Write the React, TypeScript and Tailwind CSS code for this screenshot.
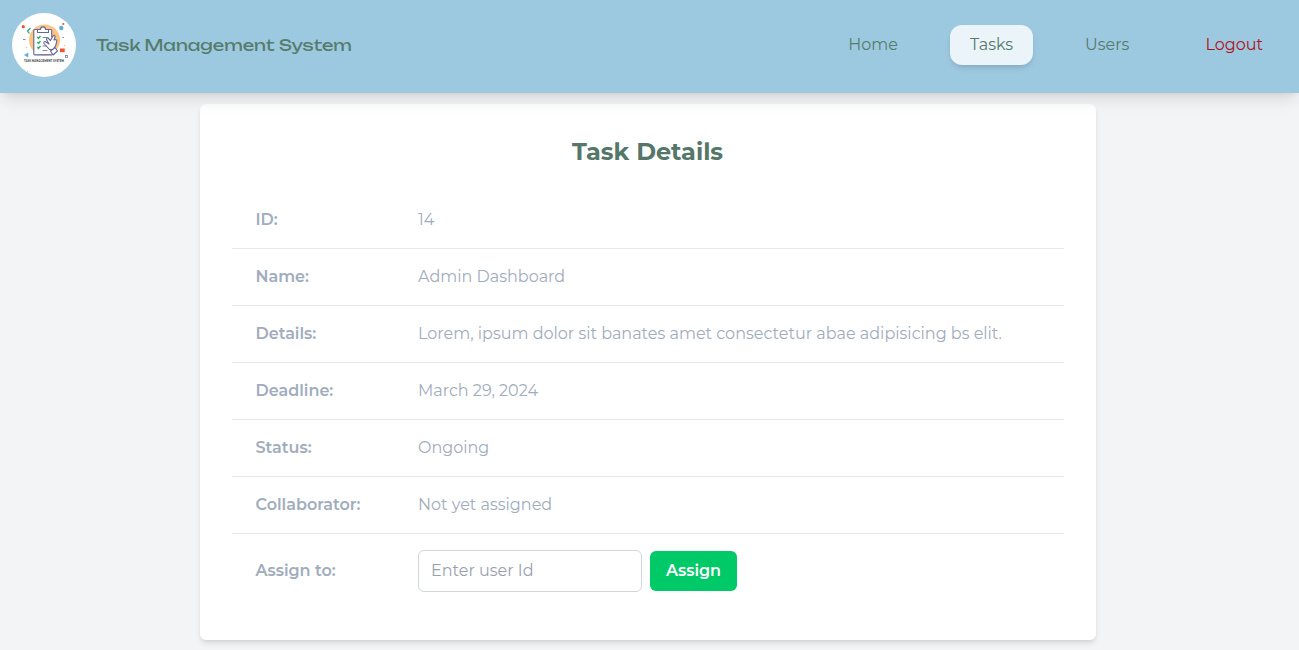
import React from 'react';

const rows = [
  { label: 'ID:', value: '14' },
  { label: 'Name:', value: 'Admin Dashboard' },
  { label: 'Details:', value: 'Lorem, ipsum dolor sit banates amet consectetur abae adipisicing bs elit.' },
  { label: 'Deadline:', value: 'March 29, 2024' },
  { label: 'Status:', value: 'Ongoing' },
  { label: 'Collaborator:', value: 'Not yet assigned' },
];

function Logo() {
  return (
    <svg viewBox="0 0 64 64" className="size-16 shrink-0 rounded-full bg-white" fill="none">
      <circle cx="32.5" cy="27" r="15.5" fill="#fdc382" />
      <path d="M22 17h18v24H22z" fill="#fff" />
      <g stroke="#62669a" strokeWidth="1.1" strokeLinejoin="round" strokeLinecap="round">
        <path d="M25.500 16.500h-2.500a1.200 1.200 0 0 0-1.200 1.200v23a1.200 1.200 0 0 0 1.200 1.200h16.500M36 16.500h2.500a1.200 1.200 0 0 1 1.200 1.200v6" />
        <path d="M25.500 19.500v-3h3c0-3.500 5-3.500 5 0h3v3z" fill="#fff" />
        <path d="M37.500 36.500l-5.500-6c-.8-2 1-2.500 2-1.500l3 2-2.500-4.500c0-2 2-2 2.500-.5l1.500 1.500 2.500-4.500c1-1.500 2.500-.5 2 1l-1 3 1.500-.5c1.500 0 1.500 2 1 3l-1 3.500 -2.500 3.500z" fill="#fff" />
        <path d="M38.500 38l4.500-3.500 2.500 3.500-4.500 4z" fill="#fff" />
        <path d="M31 24.500h5M31 33h3M31 37.500h4" strokeWidth=".8" />
      </g>
      <path d="M25.300 24l1.200 1.500 2-2.500M25.300 29l1.200 1.500 2-2.500M25.300 34l1.200 1.500 2-2.500" stroke="#27b26f" strokeWidth="1.400" />
      <path d="M18.500 15l-3 3 2 2.500" stroke="#22a674" strokeWidth="1.200" />
      <circle cx="11.300" cy="13.700" r="1.600" fill="#f4512c" />
      <circle cx="51.300" cy="11" r="1.100" fill="#f4512c" />
      <circle cx="49.300" cy="15" r="2.200" fill="#5aaedd" />
      <rect x="48" y="35.500" width="4.700" height="3.700" fill="#f4512c" />
      <path d="M12.500 42l3.500-2v4z" fill="#5aaedd" stroke="#5aaedd" strokeWidth=".6" />
      <path d="M11 26.500h2.500M50.500 24.500h1.500" stroke="#777ba5" strokeWidth=".9" />
      <rect x="53.500" y="42.500" width="2" height="2" stroke="#777ba5" strokeWidth=".8" />
      <circle cx="14.500" cy="34.500" r=".8" fill="#fdc382" />
      <circle cx="52.500" cy="32.500" r=".8" fill="#fdc382" />
      <path d="M15 59h1" stroke="#22a674" strokeWidth=".8" />
      <text x="12" y="48.800" textLength="40" lengthAdjust="spacingAndGlyphs" fontSize="3.600" fontWeight="600" fill="#333" fontFamily="Montserrat, sans-serif">TASK MANAGEMENT SYSTEM</text>
    </svg>
  );
}

export default function App() {
  return (
    <div className="min-h-[650px] bg-gray-100 font-['Montserrat',Inter,sans-serif] text-base">
      <header className="relative z-10 flex h-[93px] items-start justify-between bg-[#9dc9e0] pl-3 pr-9 pt-[13px] text-[#557c6c] shadow-lg">
        <div className="flex items-center gap-5">
          <Logo />
          <span className="font-['Unbounded','Montserrat',sans-serif] whitespace-nowrap">Task Management System</span>
        </div>
        <nav className="flex h-16 items-center">
          <a className="mr-8 px-5 py-2">Home</a>
          <a className="mr-8 rounded-xl bg-[#ebf4f9] px-5 py-2 shadow-md">Tasks</a>
          <a className="mr-14 px-5 py-2">Users</a>
          <a className="text-[#b01020]">Logout</a>
        </nav>
      </header>
      <main className="ml-[200px] mt-[11px] h-[536px] w-4xl rounded-md bg-white p-8 shadow-md">
        <h1 className="pr-px text-center text-2xl font-bold text-[#557769]">Task Details</h1>
        <div className="mt-6 text-[#a1acbc]">
          {rows.map((row) => (
            <div key={row.label} className="flex h-[57px] items-center border-b border-gray-200 pl-[23.500px]">
              <span className="w-[162.500px] font-semibold">{row.label}</span>
              <span>{row.value}</span>
            </div>
          ))}
          <div className="flex h-[74px] items-center pl-[23.500px]">
            <span className="w-[162.500px] font-semibold">Assign to:</span>
            <input className="h-[42px] w-56 rounded-md border border-gray-300 px-3 pb-0.5 placeholder:text-gray-400" placeholder="Enter user Id" />
            <button className="ml-2 h-10 rounded-md bg-[#00c968] px-4 font-semibold text-white">Assign</button>
          </div>
        </div>
      </main>
    </div>
  );
}
